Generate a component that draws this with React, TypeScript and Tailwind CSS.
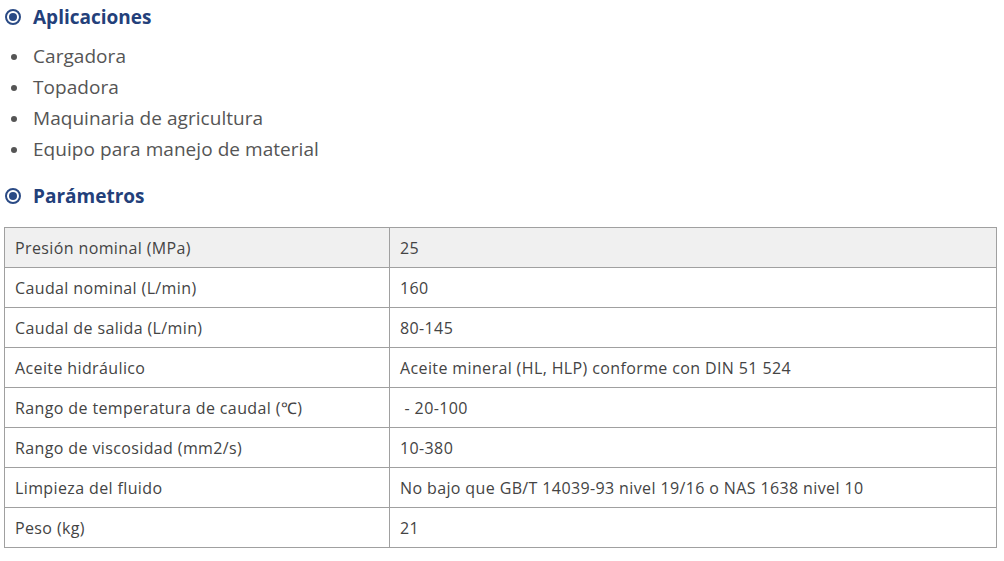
const apps = ['Cargadora', 'Topadora', 'Maquinaria de agricultura', 'Equipo para manejo de material'];

const params: [string, string][] = [
  ['Presión nominal (MPa)', '25'],
  ['Caudal nominal (L/min)', '160'],
  ['Caudal de salida (L/min)', '80-145'],
  ['Aceite hidráulico', 'Aceite mineral (HL, HLP) conforme con DIN 51 524'],
  ['Rango de temperatura de caudal (℃)', '\u00a0- 20-100'],
  ['Rango de viscosidad (mm2/s)', '10-380'],
  ['Limpieza del fluido', 'No bajo que GB/T 14039-93 nivel 19/16 o NAS 1638 nivel 10'],
  ['Peso (kg)', '21'],
];

function Heading({ children }: { children: React.ReactNode }) {
  return (
    <div className="flex items-center h-[34px]">
      <span className="w-[16px] h-[16px] ml-[5px] mr-[12px] rounded-full border-2 border-[#2a4a85] flex items-center justify-center">
        <span className="w-[8px] h-[8px] rounded-full bg-[#2a4a85]" />
      </span>
      <h3 className="text-[19px] font-bold text-[#23407a]">{children}</h3>
    </div>
  );
}

export default function App() {
  return (
    <div className="w-[1004px] h-[561px] bg-white text-[#555] font-['Open_Sans',sans-serif]">
      <Heading>Aplicaciones</Heading>
      <ul className="pt-[7px] pb-[14px]">
        {apps.map(a => (
          <li key={a} className="flex items-center h-[31px] text-[19px] tracking-[0.05px]">
            <span className="w-[6px] h-[6px] rounded-full bg-[#555] ml-[11px] mr-[16px]" />
            {a}
          </li>
        ))}
      </ul>
      <Heading>Parámetros</Heading>
      <table className="ml-[4px] mt-[14px] w-[993px] border-collapse text-[16px] tracking-[0.38px] text-[#444]">
        <tbody>
          {params.map(([k, v], i) => (
            <tr key={k} className={i === 0 ? 'bg-[#f0f0f0]' : ''}>
              <td className="w-[385px] h-[40px] px-[10px] border border-[#a0a0a0]">{k}</td>
              <td className="h-[40px] px-[10px] border border-[#a0a0a0]">{v}</td>
            </tr>
          ))}
        </tbody>
      </table>
    </div>
  );
}
